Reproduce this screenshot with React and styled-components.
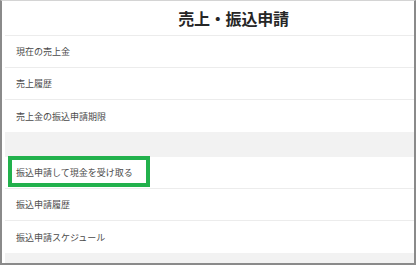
import React from "react";
import styled, { createGlobalStyle } from "styled-components";

const Global = createGlobalStyle`
  html, body { margin: 0; padding: 0; background: #ffffff; }
  body { font-family: "Noto Sans CJK JP", "Noto Sans", sans-serif; }
`;

const Frame = styled.div`
  box-sizing: border-box;
  width: 416px;
  height: 265px;
  border-top: 1px solid #d4d4d4;
  border-left: 2px solid #8a8a8a;
  border-right: 2px solid #8a8a8a;
  border-bottom: 2px solid #8a8a8a;
  padding-left: 3px;
  background: #ffffff;
  display: flex;
`;

const Column = styled.div`
  flex: 1;
  display: flex;
  flex-direction: column;
  background: #f2f2f2;
`;

const Header = styled.div`
  box-sizing: border-box;
  height: 35px;
  background: #fff;
  border-bottom: 1px solid #ececec;
  display: flex;
  align-items: center;
  justify-content: center;
  padding-left: 48px;
  font-size: 16px;
  font-weight: 700;
  color: #262626;
  letter-spacing: -0.2px;
`;

const Section = styled.div`
  display: flex;
  flex-direction: column;
  background: #fff;
`;

const Row = styled.div`
  position: relative;
  box-sizing: border-box;
  height: 32px;
  padding-left: 11px;
  display: flex;
  align-items: center;
  font-size: 9px;
  color: #4a4a4a;
  border-bottom: ${(p) => (p.$last ? "none" : "1px solid #ececec")};
`;

const Gap = styled.div`
  height: ${(p) => p.$h}px;
  flex-shrink: 0;
`;

const Highlight = styled.div`
  position: absolute;
  left: 3px;
  top: -1px;
  width: 142px;
  height: 31px;
  box-sizing: border-box;
  border: 4px solid #22b14c;
  pointer-events: none;
`;

export default function App() {
  return (
    <>
      <Global />
      <Frame>
        <Column>
          <Header>売上・振込申請</Header>
          <Section>
            <Row>現在の売上金</Row>
            <Row>売上履歴</Row>
            <Row $last>売上金の振込申請期限</Row>
          </Section>
          <Gap $h={25} />
          <Section>
            <Row>
              振込申請して現金を受け取る
              <Highlight />
            </Row>
            <Row>振込申請履歴</Row>
            <Row $last>振込申請スケジュール</Row>
          </Section>
        </Column>
      </Frame>
    </>
  );
}
